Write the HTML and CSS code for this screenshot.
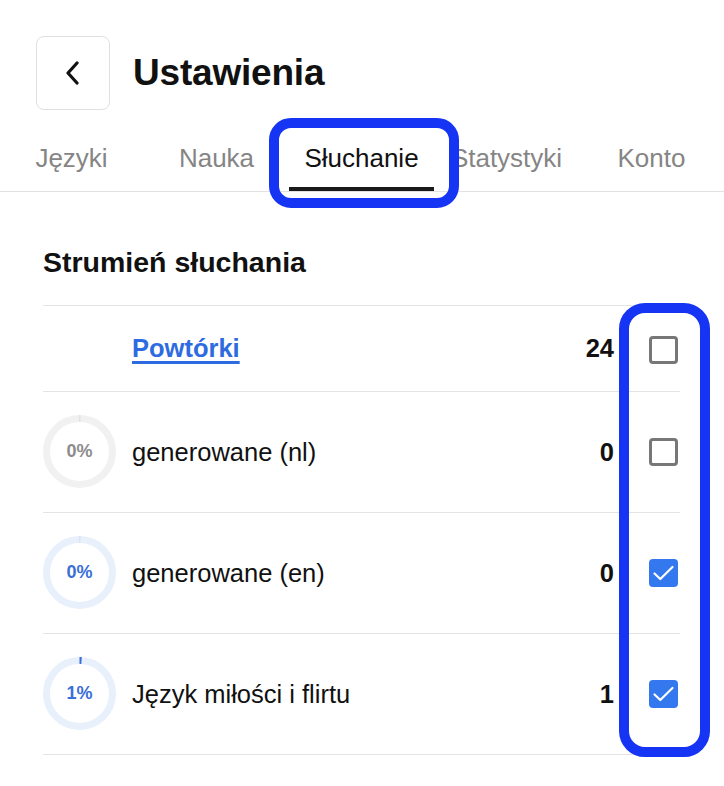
FILE: index.html
```html
<!DOCTYPE html>
<html lang="pl">
<head>
    <meta charset="UTF-8">
    <meta name="viewport" content="width=device-width, initial-scale=1.0">
    <title>Ustawienia</title>
    <link rel="stylesheet" href="styles.css">
</head>
<body>

    <div class="page">
        <header class="top-bar">
            <button class="back-btn" aria-label="Wstecz">
                <svg width="16" height="24" viewBox="0 0 16 24">
                    <path d="M12 2 L3 12 L12 22" fill="none" stroke="#111" stroke-width="3.2" stroke-linecap="round" stroke-linejoin="round"/>
                </svg>
            </button>
            <h1>Ustawienia</h1>
        </header>

        <nav class="tabs">
            <a class="tab">Języki</a>
            <a class="tab">Nauka</a>
            <a class="tab active">Słuchanie</a>
            <a class="tab">Statystyki</a>
            <a class="tab">Konto</a>
        </nav>

        <section class="stream">
            <h2>Strumień słuchania</h2>
            <ul class="stream-list">
                <li class="row row-short">
                    <span class="ring-slot"></span>
                    <a class="row-link" href="#">Powtórki</a>
                    <span class="count">24</span>
                    <span class="check"></span>
                </li>
                <li class="row">
                    <span class="ring ring-gray">
                        <svg width="73" height="73" viewBox="0 0 73 73">
                            <circle cx="36.5" cy="36.5" r="33" fill="none" stroke="#f1f1f1" stroke-width="7"/>
                            <circle cx="36.5" cy="36.5" r="33" fill="none" stroke="#d6d6d6" stroke-width="7" stroke-dasharray="0.8 220" transform="rotate(-90 36.5 36.5)"/>
                        </svg>
                        <span class="pct">0%</span>
                    </span>
                    <span class="label">generowane (nl)</span>
                    <span class="count">0</span>
                    <span class="check"></span>
                </li>
                <li class="row">
                    <span class="ring ring-blue">
                        <svg width="73" height="73" viewBox="0 0 73 73">
                            <circle cx="36.5" cy="36.5" r="33" fill="none" stroke="#e7f0fb" stroke-width="7"/>
                            <circle cx="36.5" cy="36.5" r="33" fill="none" stroke="#cfd9e6" stroke-width="7" stroke-dasharray="0.8 220" transform="rotate(-90 36.5 36.5)"/>
                        </svg>
                        <span class="pct">0%</span>
                    </span>
                    <span class="label">generowane (en)</span>
                    <span class="count">0</span>
                    <span class="check checked">
                        <svg width="29" height="28" viewBox="0 0 29 28">
                            <path d="M5.5 14.5 L11.3 20 L23.5 8" fill="none" stroke="#fff" stroke-width="2.2" stroke-linecap="round" stroke-linejoin="round"/>
                        </svg>
                    </span>
                </li>
                <li class="row">
                    <span class="ring ring-blue">
                        <svg width="73" height="73" viewBox="0 0 73 73">
                            <circle cx="36.5" cy="36.5" r="33" fill="none" stroke="#e7f0fb" stroke-width="7"/>
                            <circle cx="36.5" cy="36.5" r="33" fill="none" stroke="#3a6fd8" stroke-width="7" stroke-dasharray="2.1 220" transform="rotate(-90 36.5 36.5)"/>
                        </svg>
                        <span class="pct">1%</span>
                    </span>
                    <span class="label">Język miłości i flirtu</span>
                    <span class="count">1</span>
                    <span class="check checked">
                        <svg width="29" height="28" viewBox="0 0 29 28">
                            <path d="M5.5 14.5 L11.3 20 L23.5 8" fill="none" stroke="#fff" stroke-width="2.2" stroke-linecap="round" stroke-linejoin="round"/>
                        </svg>
                    </span>
                </li>
            </ul>
        </section>

        <!-- annotation frames drawn over the screenshot -->
        <div class="highlight highlight-tab"></div>
        <div class="highlight highlight-checks"></div>
    </div>

</body>
</html>
```

FILE: styles.css
```css
/* Basic reset */
* {
    margin: 0;
    padding: 0;
    box-sizing: border-box;
}

body {
    font-family: 'Liberation Sans', Arial, sans-serif;
    background-color: #fff;
    color: #111;
}

.page {
    position: relative;
    width: 724px;
    height: 786px;
    overflow: hidden;
}

/* Header */
.top-bar {
    display: flex;
    align-items: center;
    gap: 23px;
    padding: 36px 0 0 36px;
}

.back-btn {
    width: 74px;
    height: 74px;
    border: 1.5px solid #e0e0e0;
    border-radius: 8px;
    background: #fff;
    display: flex;
    justify-content: center;
    align-items: center;
}

.top-bar h1 {
    font-size: 37px;
    font-weight: bold;
    letter-spacing: -0.2px;
    color: #111;
}

/* Tabs */
.tabs {
    display: grid;
    grid-template-columns: repeat(5, 1fr);
    border-bottom: 1.5px solid #e2e2e2;
    margin-left: -1px;
}

.tab {
    padding: 33px 0 14px;
    font-size: 26px;
    line-height: 30px;
    text-align: center;
    color: #858585;
    border-bottom: 4px solid transparent;
    white-space: nowrap;
}

.tab.active {
    color: #111;
    border-bottom-color: #1a1a1a;
}

/* Stream list */
.stream {
    padding: 0 44px 0 43px;
}

.stream h2 {
    margin-top: 53px;
    margin-bottom: 26px;
    font-size: 28.5px;
    line-height: 34px;
    font-weight: bold;
    color: #111;
}

.stream-list {
    list-style: none;
    border-top: 1.5px solid #e4e4e4;
}

.row {
    display: grid;
    grid-template-columns: 73px 1fr auto 29px;
    align-items: center;
    height: 121px;
    padding-right: 2px;
    border-bottom: 1.5px solid #e4e4e4;
}

.row-short {
    height: 86px;
}

.row-short .check {
    margin-top: 3px;
}

.ring-slot {
    width: 73px;
}

.ring {
    display: grid;
    place-items: center;
    width: 73px;
    height: 73px;
    margin-top: -2px;
}

.ring svg,
.ring .pct {
    grid-area: 1 / 1;
}

.pct {
    font-size: 18px;
    font-weight: bold;
}

.ring-gray .pct {
    color: #8c8c8c;
}

.ring-blue .pct {
    color: #3a6fd8;
}

.label,
.row-link {
    margin-left: 16px;
    font-size: 25.5px;
}

.row-link {
    font-weight: bold;
    color: #2d6be0;
    text-decoration: underline;
    text-decoration-thickness: 3px;
    text-underline-offset: 4px;
    justify-self: start;
}

.count {
    font-size: 25.5px;
    font-weight: bold;
    margin-right: 35px;
}

.check {
    width: 29px;
    height: 28px;
    border: 3px solid #777;
    border-radius: 4px;
}

.check.checked {
    border: none;
    background-color: #3478f0;
    display: flex;
}

/* Highlight frames */
.highlight {
    position: absolute;
    border: 10px solid #1634f4;
    pointer-events: none;
}

.highlight-tab {
    left: 269px;
    top: 118px;
    width: 190px;
    height: 90px;
    border-radius: 22px;
}

.highlight-checks {
    left: 619px;
    top: 303px;
    width: 91px;
    height: 454px;
    border-radius: 26px;
}
```
